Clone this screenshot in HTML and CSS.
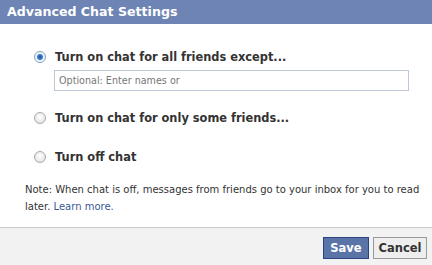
FILE: index.html
```html
<!DOCTYPE html>
<html>
<head>
<meta charset="utf-8">
<link rel="stylesheet" href="styles.css">
</head>
<body>
<div class="dialog">
  <div class="header">Advanced Chat Settings</div>
  <div class="body">
    <div class="option">
      <span class="radio checked"></span>
      <span class="label">Turn on chat for all friends except...</span>
    </div>
    <div class="input"><span class="placeholder">Optional: Enter names or</span></div>
    <div class="option opt2">
      <span class="radio"></span>
      <span class="label">Turn on chat for only some friends...</span>
    </div>
    <div class="option opt3">
      <span class="radio"></span>
      <span class="label">Turn off chat</span>
    </div>
    <p class="note">Note: When chat is off, messages from friends go to your inbox for you to read later. <span class="link">Learn more.</span></p>
  </div>
  <div class="footer">
    <button class="btn save">Save</button>
    <button class="btn cancel">Cancel</button>
  </div>
</div>
</body>
</html>
```
FILE: styles.css
```css
html, body { margin: 0; padding: 0; background: #fff; }
body { width: 432px; height: 265px; overflow: hidden; font-family: "DejaVu Sans", Verdana, sans-serif; }
.dialog { width: 432px; height: 265px; display: flex; flex-direction: column; }
.header {
  height: 24px; background: #6d84b4; color: #fff; flex: none;
  font-weight: bold; font-size: 12.6px; line-height: 23px; padding-left: 7px;
  box-sizing: border-box;
}
.body { flex: 1; padding: 26px 0 0 34px; }
.option { display: flex; align-items: center; height: 14px; }
.radio {
  width: 10px; height: 10px; border-radius: 50%;
  border: 1px solid #a8a8a8; background: radial-gradient(circle at 50% 40%, #fff, #dcdcdc);
  box-sizing: content-box; margin-right: 9px; flex: none;
}
.radio.checked { border-color: #7f9db9; background: radial-gradient(circle, #1d4f9f 0, #3c7fd1 2.5px, #e8eef6 3.5px, #fff 5px); }
.label { font-weight: bold; font-size: 11.4px; color: #333; }
.input {
  margin: 6px 0 0 20px; width: 355px; height: 21px; box-sizing: border-box;
  border: 1px solid #bdc7d8; display: flex; align-items: center; padding-left: 4px;
}
.placeholder { font-size: 9.6px; color: #777; }
.opt2 { margin-top: 20px; }
.opt3 { margin-top: 25px; }
.note { margin: 17px 0 0 -9px; font-size: 10px; color: #333; line-height: 17px; width: 400px; }
.link { color: #3b5998; }
.footer {
  height: 38px; background: #f2f2f2; border-top: 1px solid #ccc; flex: none;
  display: flex; justify-content: flex-end; align-items: flex-end; padding: 0 5px 6px 0; box-sizing: border-box; gap: 4px;
}
.btn { font-family: inherit; font-weight: bold; font-size: 11.5px; height: 22px; padding: 0 4px; margin: 0; }
.save { background: #5b74a8; color: #fff; border: 1px solid #29447e; width: 46px; }
.cancel { background: #eeeeee; color: #333; border: 1px solid #999; width: 54px; }
```
